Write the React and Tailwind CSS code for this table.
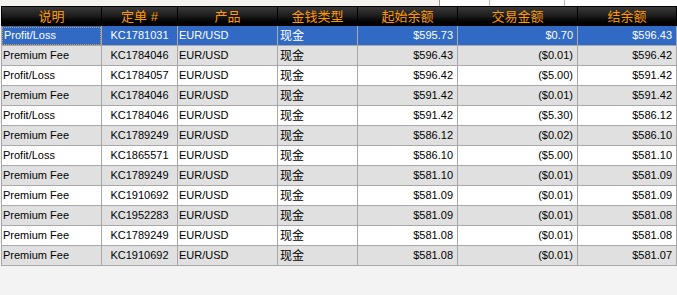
import React from "react";

const rows = [
  ["Profit/Loss", "KC1781031", "EUR/USD", "现金", "$595.73", "$0.70", "$596.43"],
  ["Premium Fee", "KC1784046", "EUR/USD", "现金", "$596.43", "($0.01)", "$596.42"],
  ["Profit/Loss", "KC1784057", "EUR/USD", "现金", "$596.42", "($5.00)", "$591.42"],
  ["Premium Fee", "KC1784046", "EUR/USD", "现金", "$591.42", "($0.01)", "$591.42"],
  ["Profit/Loss", "KC1784046", "EUR/USD", "现金", "$591.42", "($5.30)", "$586.12"],
  ["Premium Fee", "KC1789249", "EUR/USD", "现金", "$586.12", "($0.02)", "$586.10"],
  ["Profit/Loss", "KC1865571", "EUR/USD", "现金", "$586.10", "($5.00)", "$581.10"],
  ["Premium Fee", "KC1789249", "EUR/USD", "现金", "$581.10", "($0.01)", "$581.09"],
  ["Premium Fee", "KC1910692", "EUR/USD", "现金", "$581.09", "($0.01)", "$581.09"],
  ["Premium Fee", "KC1952283", "EUR/USD", "现金", "$581.09", "($0.01)", "$581.08"],
  ["Premium Fee", "KC1789249", "EUR/USD", "现金", "$581.08", "($0.01)", "$581.08"],
  ["Premium Fee", "KC1910692", "EUR/USD", "现金", "$581.08", "($0.01)", "$581.07"],
];

const headers = ["说明", "定单 #", "产品", "金钱类型", "起始余额", "交易金额", "结余额"];
const widths = ["w-[100px]", "w-[76px]", "w-[100px]", "w-[80px]", "w-[100px]", "w-[120px]", "w-[99px]"];
const aligns = ["text-left pl-[1px]", "text-center", "text-left pl-[1px]", "text-left pl-[2px]", "text-right pr-[4px]", "text-right pr-[4px]", "text-right pr-[4px]"];

export default function App() {
  return (
    <div className="w-[677px] h-[295px] bg-[#f3f3f3] overflow-hidden font-['Liberation_Sans','Noto_Sans_CJK_SC',sans-serif]">
      <div className="h-[6px] flex">
        <div className="w-[439px] bg-[#f4f3ee]" />
        <div className="flex-1 bg-white border-l border-[#999] flex">
          <div className="w-[50px] border-r border-[#bbb]" />
          <div className="w-[75px] border-r border-[#bbb]" />
        </div>
      </div>
      <table className="ml-[1px] border-collapse table-fixed w-[675px] text-[11px] leading-none">
        <colgroup>
          {widths.map((w, i) => (
            <col key={i} className={w} />
          ))}
        </colgroup>
        <thead>
          <tr className="h-[19px] bg-gradient-to-b from-[#3a3a3a] via-[#1a1a1a] to-[#000]">
            {headers.map((h, i) => (
              <th
                key={i}
                className="border border-black text-center font-normal text-[13px] text-[#ff9a00] p-0"
              >
                {h}
              </th>
            ))}
          </tr>
        </thead>
        <tbody>
          {rows.map((r, ri) => {
            const sel = ri === 0;
            const bg = sel ? "bg-[#316ac5] text-white" : ri % 2 === 1 ? "bg-[#e0e0e0] text-black" : "bg-white text-black";
            return (
              <tr key={ri} className={`h-[20px] ${bg}`}>
                {r.map((c, ci) => (
                  <td
                    key={ci}
                    className={`border border-[#a8a8a8] p-0 whitespace-nowrap ${aligns[ci]} ${ci === 3 ? "text-[12px]" : ""}`}
                  >
                    {sel && ci === 0 ? (
                      <div className="h-[18px] flex items-center pl-[1px] -ml-[1px] border border-dotted border-[#c8a050]">
                        {c}
                      </div>
                    ) : (
                      c
                    )}
                  </td>
                ))}
              </tr>
            );
          })}
        </tbody>
      </table>
    </div>
  );
}
